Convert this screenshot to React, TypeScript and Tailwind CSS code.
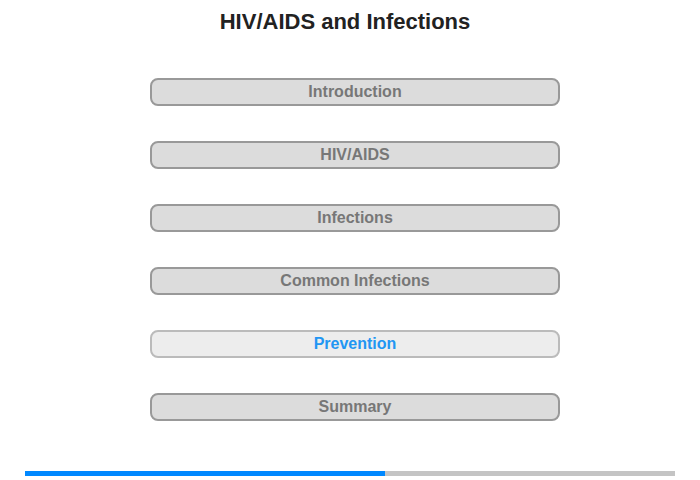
const sections = [
  { label: "Introduction" },
  { label: "HIV/AIDS" },
  { label: "Infections" },
  { label: "Common Infections" },
  { label: "Prevention", active: true },
  { label: "Summary" },
];

export default function App() {
  return (
    <div className="w-[700px] h-[480px] bg-white font-['Liberation_Sans',Arial,sans-serif] flex flex-col">
      {/* Title */}
      <h1 className="pt-[9px] pr-[10px] h-[78px] text-center text-[22px] leading-[26px] font-bold text-[#222222]">
        HIV/AIDS and Infections
      </h1>

      {/* Menu */}
      <div className="pl-[10px] flex flex-col items-center gap-[35px]">
        {sections.map((s) =>
          s.active ? (
            <button
              key={s.label}
              className="w-[410px] h-[28px] rounded-[8px] border-2 border-[#bbbbbb] bg-[#ededed] text-[16px] font-bold text-[#2196f3] leading-none"
            >
              {s.label}
            </button>
          ) : (
            <button
              key={s.label}
              className="w-[410px] h-[28px] rounded-[8px] border-2 border-[#999999] bg-[#dcdcdc] text-[16px] font-bold text-[#777777] leading-none"
            >
              {s.label}
            </button>
          )
        )}
      </div>

      {/* Progress */}
      <div className="mt-[50px] mx-[25px] h-[5px] flex bg-[#c4c4c4]">
        <div className="w-[360px] bg-[#0088ff]" />
      </div>
    </div>
  );
}
